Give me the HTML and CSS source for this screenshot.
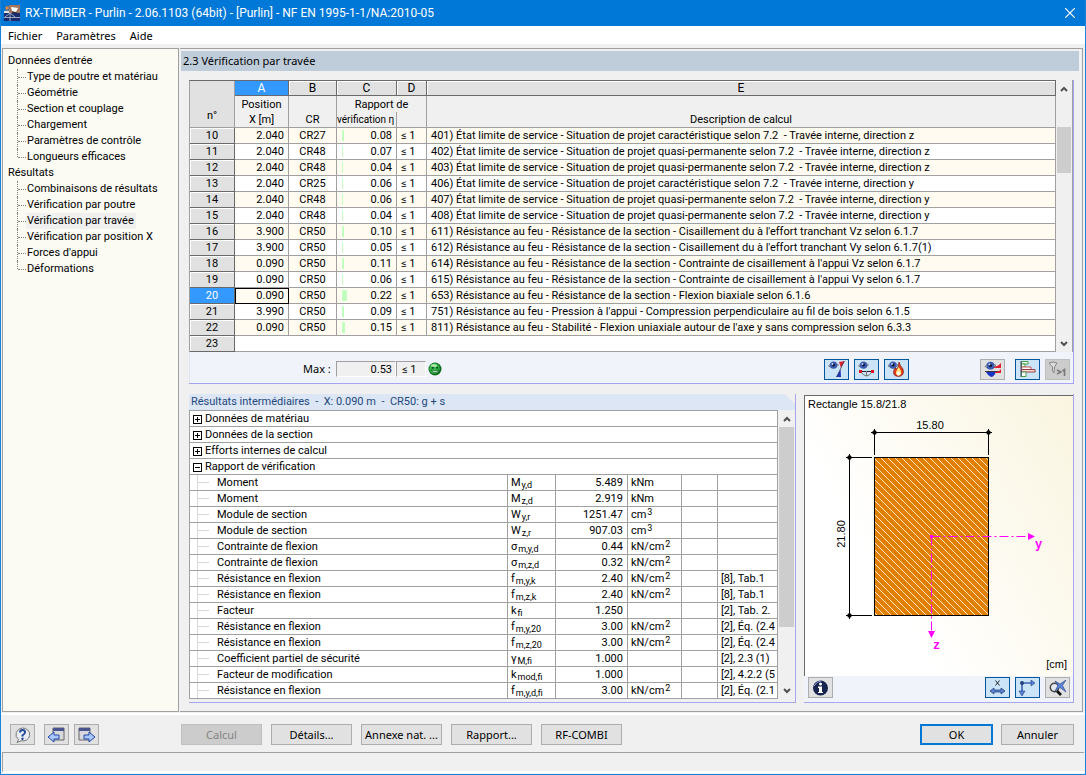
FILE: index.html
```html
<!DOCTYPE html>
<html lang="fr">
<head>
<meta charset="utf-8">
<title>RX-TIMBER - Purlin</title>
<link rel="stylesheet" href="styles.css">
</head>
<body>
<svg class="defs" aria-hidden="true">
  <symbol id="eye" viewBox="0 0 12 9"><path d="M1 5Q5-1 11 4Q7 9 1 5Z" fill="#cfd8ea" stroke="#666" stroke-width=".8"/><circle cx="6" cy="4.200" r="3.600" fill="#3b5bb0"/><circle cx="6" cy="4" r="1.400" fill="#0a1030"/><circle cx="5" cy="3" r=".9" fill="#cfe0ff"/></symbol>
  <symbol id="up" viewBox="0 0 8 6"><path d="M1 5L4 2L7 5" fill="none" stroke="#505050" stroke-width="2"/></symbol>
  <symbol id="down" viewBox="0 0 8 6"><path d="M1 1L4 4L7 1" fill="none" stroke="#505050" stroke-width="2"/></symbol>
</svg>
<div class="window">
  <header class="titlebar">
    <svg class="app-icon" viewBox="0 0 16 16"><path d="M1 1H5V6H1Z" fill="#5d7891"/><path d="M2 1L5 3L2 5Z" fill="#f08a3c"/><path d="M5 0H16V9H5Z" fill="#a5765f"/><path d="M7 2L14 3L12 7L8 6Z" fill="#fff"/><path d="M8 7L13 8" stroke="#223"/><path d="M0 8H16V16H0Z" fill="#1b2c6b"/><path d="M0 8H5V6H0Z" fill="#dfe3ea"/><path d="M1 12L6 8L11 12M0 12.500H16M6 8V16" fill="none" stroke="#aeb8d4" stroke-width=".9"/></svg>
    <h1>RX-TIMBER - Purlin - 2.06.1103 (64bit) - [Purlin] - NF EN 1995-1-1/NA:2010-05</h1>
    <button class="close" aria-label="Fermer"><svg viewBox="0 0 10 10"><path d="M0 0L10 10M10 0L0 10" stroke="#fff" stroke-width="1.200"/></svg></button>
  </header>
  <nav class="menu"><button>Fichier</button><button>Paramètres</button><button>Aide</button></nav>
  <div class="body">
    <nav class="tree" aria-label="Navigation">
      <div class="root">Données d'entrée</div>
      <ul>
        <li><a href="#">Type de poutre et matériau</a></li>
        <li><a href="#">Géométrie</a></li>
        <li><a href="#">Section et couplage</a></li>
        <li><a href="#">Chargement</a></li>
        <li><a href="#">Paramètres de contrôle</a></li>
        <li><a href="#">Longueurs efficaces</a></li>
      </ul>
      <div class="root">Résultats</div>
      <ul>
        <li><a href="#">Combinaisons de résultats</a></li>
        <li><a href="#">Vérification par poutre</a></li>
        <li><a href="#" class="current">Vérification par travée</a></li>
        <li><a href="#">Vérification par position X</a></li>
        <li><a href="#">Forces d'appui</a></li>
        <li><a href="#">Déformations</a></li>
      </ul>
    </nav>
    <main class="content">
      <h2>2.3 Vérification par travée</h2>
      <div class="sections">
        <section class="upper">
          <div class="scroller">
            <table class="grid">
              <colgroup><col class="w-n"><col class="w-a"><col class="w-b"><col class="w-c"><col class="w-d"><col></colgroup>
              <thead>
                <tr class="letters"><th rowspan="3" class="corner">n°</th><th class="active">A</th><th>B</th><th>C</th><th>D</th><th>E</th></tr>
                <tr class="names"><th class="open">Position</th><th class="open"></th><th colspan="2" class="open">Rapport de</th><th class="open"></th></tr>
                <tr class="names"><th>X [m]</th><th>CR</th><th class="clip">vérification η</th><th></th><th>Description de calcul</th></tr>
              </thead>
              <tbody>
                <tr><th>10</th><td>2.040</td><td>CR27</td><td><i class="bar" style="width:2px"></i>0.08</td><td>≤ 1</td><td>401) État limite de service - Situation de projet caractéristique selon 7.2&nbsp; - Travée interne, direction z</td></tr>
                <tr><th>11</th><td>2.040</td><td>CR48</td><td><i class="bar" style="width:1px"></i>0.07</td><td>≤ 1</td><td>402) État limite de service - Situation de projet quasi-permanente selon 7.2&nbsp; - Travée interne, direction z</td></tr>
                <tr><th>12</th><td>2.040</td><td>CR48</td><td><i class="bar" style="width:1px"></i>0.04</td><td>≤ 1</td><td>403) État limite de service - Situation de projet quasi-permanente selon 7.2&nbsp; - Travée interne, direction z</td></tr>
                <tr><th>13</th><td>2.040</td><td>CR25</td><td><i class="bar" style="width:1px"></i>0.06</td><td>≤ 1</td><td>406) État limite de service - Situation de projet caractéristique selon 7.2&nbsp; - Travée interne, direction y</td></tr>
                <tr><th>14</th><td>2.040</td><td>CR48</td><td><i class="bar" style="width:1px"></i>0.06</td><td>≤ 1</td><td>407) État limite de service - Situation de projet quasi-permanente selon 7.2&nbsp; - Travée interne, direction y</td></tr>
                <tr><th>15</th><td>2.040</td><td>CR48</td><td><i class="bar" style="width:1px"></i>0.04</td><td>≤ 1</td><td>408) État limite de service - Situation de projet quasi-permanente selon 7.2&nbsp; - Travée interne, direction y</td></tr>
                <tr><th>16</th><td>3.900</td><td>CR50</td><td><i class="bar" style="width:2px"></i>0.10</td><td>≤ 1</td><td>611) Résistance au feu - Résistance de la section - Cisaillement du à l'effort tranchant Vz selon 6.1.7</td></tr>
                <tr><th>17</th><td>3.900</td><td>CR50</td><td><i class="bar" style="width:1px"></i>0.05</td><td>≤ 1</td><td>612) Résistance au feu - Résistance de la section - Cisaillement du à l'effort tranchant Vy selon 6.1.7(1)</td></tr>
                <tr><th>18</th><td>0.090</td><td>CR50</td><td><i class="bar" style="width:2px"></i>0.11</td><td>≤ 1</td><td>614) Résistance au feu - Résistance de la section - Contrainte de cisaillement à l'appui Vz selon 6.1.7</td></tr>
                <tr><th>19</th><td>0.090</td><td>CR50</td><td><i class="bar" style="width:1px"></i>0.06</td><td>≤ 1</td><td>615) Résistance au feu - Résistance de la section - Contrainte de cisaillement à l'appui Vy selon 6.1.7</td></tr>
                <tr class="selected"><th>20</th><td>0.090</td><td>CR50</td><td><i class="bar" style="width:5px"></i>0.22</td><td>≤ 1</td><td>653) Résistance au feu - Résistance de la section - Flexion biaxiale selon 6.1.6</td></tr>
                <tr><th>21</th><td>3.990</td><td>CR50</td><td><i class="bar" style="width:2px"></i>0.09</td><td>≤ 1</td><td>751) Résistance au feu - Pression à l'appui - Compression perpendiculaire au fil de bois selon 6.1.5</td></tr>
                <tr><th>22</th><td>0.090</td><td>CR50</td><td><i class="bar" style="width:3px"></i>0.15</td><td>≤ 1</td><td>811) Résistance au feu - Stabilité - Flexion uniaxiale autour de l'axe y sans compression selon 6.3.3</td></tr>
                <tr class="empty"><th>23</th><td colspan="5"></td></tr>
              </tbody>
            </table>
            <div class="scrollbar"><button aria-label="Monter"><svg><use href="#up"/></svg></button><div class="track"><div class="thumb small"></div></div><button aria-label="Descendre"><svg><use href="#down"/></svg></button></div>
          </div>
          <div class="strip">
            <div class="max"><span class="max-label">Max :</span><output class="max-value">0.53</output><output class="max-limit">≤ 1</output>
              <svg class="smile" viewBox="0 0 14 14"><circle cx="7" cy="7" r="6.500" fill="#0b6a1c"/><circle cx="6.500" cy="6.500" r="5.200" fill="#35b545"/><ellipse cx="6" cy="3.500" rx="3" ry="1.600" fill="#a9e6a8"/><circle cx="4.800" cy="5.800" r="1" fill="#042"/><circle cx="9.200" cy="5.800" r="1" fill="#042"/><path d="M3 8Q7 13 11 8Q7 9.500 3 8Z" fill="#e9ffe6" stroke="#042" stroke-width=".6"/></svg></div>
            <div class="tools">
              <button class="tool on" aria-label="Afficher les couleurs"><svg viewBox="0 0 19 16"><use href="#eye" x="0" y="0" width="13" height="9"/><path d="M12 1L18 0L14 7Z" fill="#e02030"/><path d="M13.500 8L9 16H14Z" fill="#1a35c0"/><path d="M17 0L10 16" stroke="#445" stroke-width=".8"/></svg></button>
              <button class="tool on" aria-label="Afficher les appuis"><svg viewBox="0 0 19 16"><use href="#eye" x="0" y="0" width="13" height="9"/><path d="M3 10.500H16" stroke="#222"/><path d="M4 11Q9.500 19 15 11M9.500 10V15" fill="none" stroke="#777"/><path d="M2 9H5V12H2ZM14 9H17V12H14Z" fill="#e01020"/></svg></button>
              <button class="tool on" aria-label="Résistance au feu"><svg viewBox="0 0 19 16"><use href="#eye" x="0" y="0" width="12" height="9"/><path d="M12 1Q13 5 16 8Q18 15 11.500 15.500Q5 15 7 9L8 7L10 8Q12 5 12 1Z" fill="#e23b1a" stroke="#7a1c10" stroke-width=".7"/><path d="M11.500 6Q15 10 14 13Q11.500 16 9 13Q8.500 11 11.500 6Z" fill="#ffe07a"/><ellipse cx="11.500" cy="12.500" rx="1.600" ry="2" fill="#fff"/></svg></button>
              <span class="spacer"></span>
              <button class="tool" aria-label="Diagrammes"><svg viewBox="0 0 19 16"><path d="M18 2V7H11V5.500Q15 5.500 18 2Z" fill="#e02030"/><use href="#eye" x="1" y="0" width="13" height="10"/><path d="M2 10.500H18" stroke="#334"/><path d="M3 11H13Q11 16 8 16Q5 15 3 11Z" fill="#1a35c0"/><path d="M12 11Q16 11 18 8V12H12Z" fill="#e02030"/></svg></button>
              <span class="split"></span>
              <button class="tool on" aria-label="Barres de rapport"><svg viewBox="0 0 19 16"><g fill="#fff" stroke-width=".9"><path d="M3.500 .5H10V3H3.500Z" stroke="#393"/><path d="M3.500 3H7V6H3.500Z" stroke="#393"/><path d="M3.500 6H13V8.500H3.500Z" stroke="#b44"/><path d="M3.500 8.500H17V11H3.500Z" stroke="#833" fill="#ffd8d8"/><path d="M3.500 11H8V15.500H3.500Z" stroke="#393"/></g><path d="M3 0V16" stroke="#446"/></svg></button>
              <button class="tool off" disabled aria-label="Filtrer les rapports supérieurs à 1"><svg viewBox="0 0 19 16"><path d="M1 2Q5 0 9 2L6.500 6L6 12L4.500 10V6Z" fill="#ddd" stroke="#888"/><path d="M9 9L13 11L9 13" fill="none" stroke="#777" stroke-width="1.400"/><path d="M14.500 10L16.500 8.500V15" fill="none" stroke="#777" stroke-width="1.600"/></svg></button>
            </div>
          </div>
        </section>
        <div class="lower">
          <section class="results">
            <h3>Résultats intermédiaires&nbsp; -&nbsp; X: 0.090 m&nbsp; -&nbsp; CR50: g + s</h3>
            <div class="scroller">
              <table class="detail">
                <colgroup><col><col class="w-sym"><col class="w-val"><col class="w-unit"><col class="w-gap"><col class="w-ref"></colgroup>
                <tbody>
                  <tr class="group"><td colspan="6"><button class="box plus" aria-label="Développer"></button>Données de matériau</td></tr>
                  <tr class="group"><td colspan="6"><button class="box plus" aria-label="Développer"></button>Données de la section</td></tr>
                  <tr class="group"><td colspan="6"><button class="box plus" aria-label="Développer"></button>Efforts internes de calcul</td></tr>
                  <tr class="group"><td colspan="6"><button class="box" aria-label="Réduire"></button>Rapport de vérification</td></tr>
                  <tr><td>Moment</td><td>M<sub>y,d</sub></td><td>5.489</td><td>kNm</td><td></td><td></td></tr>
                  <tr><td>Moment</td><td>M<sub>z,d</sub></td><td>2.919</td><td>kNm</td><td></td><td></td></tr>
                  <tr><td>Module de section</td><td>W<sub>y,r</sub></td><td>1251.47</td><td>cm<sup>3</sup></td><td></td><td></td></tr>
                  <tr><td>Module de section</td><td>W<sub>z,r</sub></td><td>907.03</td><td>cm<sup>3</sup></td><td></td><td></td></tr>
                  <tr><td>Contrainte de flexion</td><td>σ<sub>m,y,d</sub></td><td>0.44</td><td>kN/cm<sup>2</sup></td><td></td><td></td></tr>
                  <tr><td>Contrainte de flexion</td><td>σ<sub>m,z,d</sub></td><td>0.32</td><td>kN/cm<sup>2</sup></td><td></td><td></td></tr>
                  <tr><td>Résistance en flexion</td><td>f<sub>m,y,k</sub></td><td>2.40</td><td>kN/cm<sup>2</sup></td><td></td><td>[8], Tab.1</td></tr>
                  <tr><td>Résistance en flexion</td><td>f<sub>m,z,k</sub></td><td>2.40</td><td>kN/cm<sup>2</sup></td><td></td><td>[8], Tab.1</td></tr>
                  <tr><td>Facteur</td><td>k<sub>fi</sub></td><td>1.250</td><td></td><td></td><td>[2], Tab. 2.</td></tr>
                  <tr><td>Résistance en flexion</td><td>f<sub>m,y,20</sub></td><td>3.00</td><td>kN/cm<sup>2</sup></td><td></td><td>[2], Éq. (2.4</td></tr>
                  <tr><td>Résistance en flexion</td><td>f<sub>m,z,20</sub></td><td>3.00</td><td>kN/cm<sup>2</sup></td><td></td><td>[2], Éq. (2.4</td></tr>
                  <tr><td>Coefficient partiel de sécurité</td><td>γ<sub>M,fi</sub></td><td>1.000</td><td></td><td></td><td>[2], 2.3 (1)</td></tr>
                  <tr><td>Facteur de modification</td><td>k<sub>mod,fi</sub></td><td>1.000</td><td></td><td></td><td>[2], 4.2.2 (5</td></tr>
                  <tr><td>Résistance en flexion</td><td>f<sub>m,y,d,fi</sub></td><td>3.00</td><td>kN/cm<sup>2</sup></td><td></td><td>[2], Éq. (2.1</td></tr>
                </tbody>
              </table>
              <div class="scrollbar"><button aria-label="Monter"><svg><use href="#up"/></svg></button><div class="track"><div class="thumb large"></div></div><button aria-label="Descendre"><svg><use href="#down"/></svg></button></div>
            </div>
          </section>
          <section class="view">
            <div class="canvas">
            <svg class="drawing" viewBox="0 0 268 279" role="img" aria-label="Section rectangulaire">
              <defs><pattern id="hatch" width="7" height="7" patternUnits="userSpaceOnUse"><rect width="7" height="7" fill="#e07f00"/><path d="M-1-1L8 8M-1 6L1 8M6-1L8 1" stroke="#ffe6c4" stroke-width="1"/></pattern></defs>
              <text x="3" y="12">Rectangle 15.8/21.8</text>
              <rect x="69.500" y="61.500" width="114" height="158" fill="url(#hatch)" stroke="#000"/>
              <path class="dim" d="M66 36.500H187M69.500 33V59M183.500 33V59M44.500 58V223M41 61.500H67M41 219.500H67"/>
              <g fill="#000"><circle cx="69.500" cy="36.500" r="2.200"/><circle cx="183.500" cy="36.500" r="2.200"/><circle cx="44.500" cy="61.500" r="2.200"/><circle cx="44.500" cy="219.500" r="2.200"/></g>
              <text x="125" y="33" class="mid">15.80</text>
              <text x="0" y="0" class="mid" transform="translate(40 138) rotate(-90)">21.80</text>
              <path d="M126.500 140.500H224M126.500 140.500V235" class="axis"/>
              <g fill="#f0f"><rect x="125" y="139" width="3" height="3"/><path d="M223 137L230 140.500L223 144ZM123 235L126.500 242L130 235Z"/></g>
              <text x="230" y="152" class="axis-name">y</text><text x="128" y="253" class="axis-name">z</text>
              <text x="262" y="272" class="end">[cm]</text>
            </svg>
            </div>
            <div class="strip">
              <button class="tool" aria-label="Informations"><svg viewBox="0 0 19 16"><circle cx="9.500" cy="8" r="7.500" fill="#17244f"/><path d="M3 6Q6 1 10 1" stroke="#8ea0d8" fill="none"/><circle cx="9.500" cy="4" r="1.500" fill="#fff"/><path d="M7 6.500H11V12H12V13H7V12H8V8H7Z" fill="#fff"/></svg></button>
              <div class="tools">
                <button class="tool on" aria-label="Cotes"><svg viewBox="0 0 19 16"><path d="M7.500 .5L11.500 5.500M11.500 .5L7.500 5.500" stroke="#111" fill="none" stroke-width=".9"/><path d="M2 11L6 8V10H13V8L17 11L13 14V12H6V14Z" fill="#5b84d8" stroke="#24427e" stroke-width=".8"/></svg></button>
                <button class="tool on" aria-label="Axes"><svg viewBox="0 0 19 16"><path d="M4 12V3H14" fill="none" stroke="#3d61b5" stroke-width="1.600"/><path d="M13 0L17 3L13 6ZM1 11L4 16L7 11Z" fill="#5b84d8" stroke="#24427e" stroke-width=".6"/><circle cx="4" cy="3" r="2" fill="#24427e"/></svg></button>
                <button class="tool" aria-label="Vue entière"><svg viewBox="0 0 19 16"><circle cx="6.500" cy="7.500" r="4.200" fill="#e4e8ee" stroke="#444" stroke-width="1.400"/><path d="M9 11L13 15" stroke="#111" stroke-width="2.600"/><path d="M7 1L12 4L18 0L14.500 5.500L18 12L12 7.500L7 11L10 5.500Z" fill="#5b84d8" stroke="#24427e" stroke-width=".6"/></svg></button>
              </div>
            </div>
          </section>
        </div>
      </div>
    </main>
  </div>
  <footer class="actions">
    <button class="tool" aria-label="Aide"><svg viewBox="0 0 19 16"><path d="M9.500 1A7 6.500 0 1 1 8 13.800L4 15.500L5.500 12.500A7 6.500 0 0 1 9.500 1Z" fill="#e9edf2" stroke="#777"/><path d="M7 5.500Q7 3 9.500 3Q12 3 12 5.200Q12 7 9.500 8.300V9.500" fill="none" stroke="#24489c" stroke-width="2"/><circle cx="9.500" cy="11.800" r="1.200" fill="#24489c"/></svg></button>
    <button class="tool prev" aria-label="Page précédente"><svg viewBox="0 0 19 16"><path d="M6 1H17V13H6Z" fill="#d9d9dd" stroke="#666"/><path d="M6 1H17V4H6Z" fill="#4a5590"/><path d="M1 10L7 5V8H12V12H7V15Z" fill="#a9c8ff" stroke="#2447a8"/></svg></button>
    <button class="tool" aria-label="Page suivante"><svg viewBox="0 0 19 16"><path d="M2 1H13V13H2Z" fill="#d9d9dd" stroke="#666"/><path d="M2 1H13V4H2Z" fill="#4a5590"/><path d="M18 10L12 5V8H7V12H12V15Z" fill="#a9c8ff" stroke="#2447a8"/></svg></button>
    <div class="commands"><button class="cmd" disabled>Calcul</button><button class="cmd">Détails...</button><button class="cmd">Annexe nat. ...</button><button class="cmd">Rapport...</button><button class="cmd">RF-COMBI</button></div>
    <div class="confirm"><button class="cmd default">OK</button><button class="cmd">Annuler</button></div>
  </footer>
  <div class="status"></div>
</div>
</body>
</html>
```
FILE: styles.css
```css
* { box-sizing: border-box; }
body { margin: 0; font: 11px/16px "Noto Sans", sans-serif; color: #000; background: #f0f0f0; }
button { font: inherit; color: inherit; padding: 0; border: 0; background: none; }
h1, h2, h3 { margin: 0; font-weight: normal; }
.defs { position: absolute; width: 0; height: 0; }
.window { display: flex; flex-direction: column; min-height: 100vh; border: 1px solid #1883d7; border-top: 0; background: #f0f0f0; }
.titlebar { display: flex; align-items: center; gap: 5px; height: 26px; padding: 0 10px 0 3px; background: #0078d7; color: #fff; }
.titlebar h1 { flex: 1; font-family: Roboto, sans-serif; font-size: 12px; }
.app-icon { width: 16px; height: 16px; }
.close svg { display: block; width: 10px; height: 10px; }
.menu { display: flex; gap: 14px; height: 18px; padding: 0 7px; background: #fff; font-size: 11px; line-height: 20px; }
.body { display: flex; flex: 1; gap: 1px; padding: 4px 2px 1px 1px; border-bottom: 2px solid #fff; }

.tree { width: 177px; padding: 4px 5px; background: #fbfbf4; border: 1px solid #a0a0a0; font: 11px/16px Roboto, sans-serif; }
.root { height: 16px; }
.tree ul { margin: 0; padding: 0 0 0 9px; list-style: none; }
.tree li { position: relative; height: 16px; padding-left: 9px; }
.tree li::before { content: ""; position: absolute; left: 0; top: 0; height: 16px; border-left: 1px dotted #808080; }
.tree li:last-child::before { height: 8px; }
.tree li::after { content: ""; position: absolute; left: 1px; top: 8px; width: 8px; border-top: 1px dotted #808080; }
.tree a { display: inline-block; padding: 0 2px 0 1px; color: #000; text-decoration: none; }
.tree .current { background: #f0f0f0; }

.content { display: flex; flex: 1; flex-direction: column; min-width: 0; border: 1px solid #a0a0a0; border-width: 1px 1px 1px 0; padding: 2px 3px 0 1px; }
.content h2 { height: 20px; padding-left: 2px; line-height: 20px; background: #bfcddb; font-size: 11px; }
.sections { display: flex; flex: 1; flex-direction: column; gap: 10px; padding: 9px 5px 8px 8px; }
.scroller { display: flex; }
.upper { border-right: 1px solid #a6a6f0; border-bottom: 1px solid #a6a6f0; }
.grid, .detail { flex: 1; width: 0; table-layout: fixed; border-collapse: separate; border-spacing: 0; font-family: Roboto, sans-serif; font-size: 11px; line-height: 15px; white-space: nowrap; }
.grid { border-left: 1px solid #a0a0a0; border-top: 1px solid #696969; }
.grid th, .grid td, .detail td { height: 16px; padding: 0 4px; overflow: hidden; border: 0 solid #a0a0a0; border-width: 0 1px 1px 0; }
.grid th { padding: 0 1px; font-weight: normal; }
.w-n { width: 45px; } .w-a { width: 54px; } .w-b { width: 48px; } .w-c { width: 60px; } .w-d { width: 30px; }
.grid .letters th { height: 15px; line-height: 14px; background: #e1e1e1; border-color: #696969; font-size: 12px; box-shadow: inset 1px 1px #fff; }
.grid .letters .active { background: #3399ff; color: #fff; box-shadow: none; }
.grid .letters .corner { background: #e1e1e1; border-color: #a0a0a0; padding-bottom: 4px; vertical-align: bottom; font-size: 11px; box-shadow: none; }
.grid .names th { background: #f0f0f0; }
.grid .names .open { border-bottom: 0; }
.grid .names .clip { padding: 0; text-align: left; font-size: 10px; }
.grid tbody th { background: #e1e1e1; border-color: #696969; font-size: 11px; box-shadow: inset 1px 1px #fff; }
.grid tbody td { background: #fff; }
.grid tbody tr:nth-child(odd) td { background: #fffbf0; }
.grid tbody .empty td { background: #fff; }
.grid tbody .selected th { background: #3399ff; color: #fff; box-shadow: none; }
.grid tbody .selected td:nth-child(2) { outline: 1px solid #000; outline-offset: -1px; }
.grid td:nth-child(2), .grid td:nth-child(4) { text-align: right; }
.grid td:nth-child(3) { text-align: center; }
.bar { float: left; height: 11px; margin: 2px 0 0 1px; background: #c0ffc0; }
.scrollbar { display: flex; flex-direction: column; width: 17px; padding: 0 1px; }
.scrollbar button { height: 17px; }
.scrollbar svg { display: block; width: 8px; height: 6px; margin: 0 auto; }
.track { flex: 1; }
.thumb { background: #cdcdcd; }
.upper .scrollbar { border-right: 1px solid #a0a0a0; }
.upper .track { padding-top: 30px; }
.small { height: 46px; }
.large { height: 200px; }

.strip { display: flex; justify-content: space-between; align-items: center; background: #f0f4fa; }
.upper .strip { height: 31px; padding: 3px 3px 0 1px; border-left: 1px solid #dce6f4; }
.max { display: flex; align-items: center; margin-left: 112px; }
.max-label { width: 33px; }
.max output { height: 16px; border: 1px solid #a0a0a0; border-right-color: #fff; border-bottom-color: #fff; background: #f0f0f0; font: 11px/16px Roboto, sans-serif; }
.max-value { width: 60px; padding-right: 3px; text-align: right; }
.max-limit { width: 30px; padding-left: 5px; }
.smile { width: 14px; height: 14px; margin-left: 2px; }
.tools { display: flex; gap: 5px; }
.spacer { width: 61px; }
.split { width: 0; }
.tool { display: grid; place-items: center; width: 25px; height: 21px; background: #e1e1e1; border: 1px solid #adadad; }
.tool svg { display: block; width: 19px; height: 16px; }
.tool.on { background: #cce4f7; border-color: #00569d; }
.tool.off { background: #ccc; border-color: #bfbfbf; }

.lower { display: flex; flex: 1; gap: 8px; }
.results { flex: 1; min-width: 0; border-right: 1px solid #a6a6f0; border-bottom: 1px solid #a6a6f0; }
.results h3 { height: 16px; padding-left: 2px; background: #dce6f4; color: #1f497d; font: 11px/16px Roboto, sans-serif; clip-path: polygon(0 0, calc(100% - 10px) 0, 100% 10px, 100% 100%, 0 100%); }
.detail { border-left: 1px solid #a0a0a0; border-top: 1px solid #a0a0a0; background: #fff; align-self: flex-start; }
.detail td { padding: 0 4px 0 3px; }
.w-sym { width: 48px; } .w-val { width: 72px; } .w-unit { width: 54px; } .w-gap { width: 36px; } .w-ref { width: 60px; }
.detail tr:not(.group) td:first-child { position: relative; padding-left: 27px; }
.detail tr:not(.group) td:first-child::before { content: ""; position: absolute; left: 7px; top: 0; width: 1px; height: 15px; background: #d8d8d8; }
.detail tr:not(.group) td:first-child::after { content: ""; position: absolute; left: 8px; top: 7px; width: 11px; height: 1px; background: #d8d8d8; }
.detail td:nth-child(3) { text-align: right; }
.detail td:nth-child(6) { padding-right: 0; }
.detail sub, .detail sup { font-size: 9px; line-height: 0; margin-left: 1px; }
.detail sub { vertical-align: -2px; }
.detail sup { vertical-align: 3px; }
.box { position: relative; display: inline-block; width: 9px; height: 9px; margin-right: 3px; border: 1px solid #000; background: #fff; vertical-align: -1px; }
.box::before { content: ""; position: absolute; left: 1px; top: 3px; width: 5px; height: 1px; background: #000; }
.box.plus::after { content: ""; position: absolute; left: 3px; top: 1px; width: 1px; height: 5px; background: #000; }

.view { display: flex; flex-direction: column; width: 270px; padding-top: 1px; border-right: 1px solid #a6a6f0; border-bottom: 1px solid #a6a6f0; }
.canvas { flex: 1; border-top: 1px solid #696969; border-left: 1px solid #696969; background: linear-gradient(60deg, #fff 30%, #faf5e0); }
.drawing { display: block; width: 100%; font: 11px "Liberation Sans", sans-serif; }
.dim { fill: none; stroke: #000; }
.axis { fill: none; stroke: #f0f; stroke-dasharray: 9 3 2 3; }
.axis-name { fill: #f0f; font: bold 12px "Liberation Mono", monospace; }
.mid { text-anchor: middle; }
.end { text-anchor: end; }
.view .strip { height: 26px; padding: 0 3px 3px 4px; }

.actions { display: flex; align-items: flex-start; gap: 5px; height: 37px; padding: 9px 11px 0 9px; }
.actions .prev { margin-left: 4px; }
.commands { display: flex; flex: 1; gap: 9px; margin-left: 77px; }
.confirm { display: flex; gap: 8px; }
.cmd { width: 81px; height: 21px; background: #e1e1e1; border: 1px solid #adadad; }
.confirm .cmd { width: 73px; }
.cmd:disabled { background: #ccc; border-color: #bfbfbf; color: #838383; }
.cmd.default { border: 2px solid #0078d7; }
.status { height: 21px; margin: 0 1px 1px; border-top: 1px solid #a0a0a0; border-left: 1px solid #a0a0a0; border-bottom: 2px solid #fff; }
```
